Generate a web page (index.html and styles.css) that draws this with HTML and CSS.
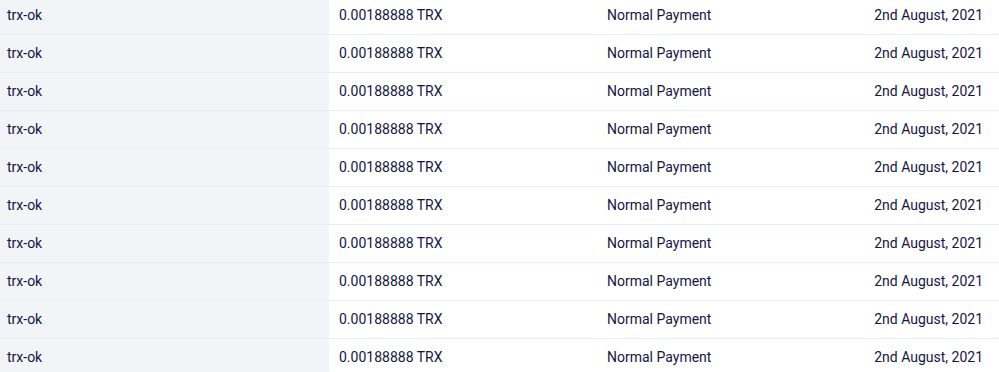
FILE: index.html
```html
<!DOCTYPE html>
<html lang="en">
<head>
<meta charset="utf-8">
<title>Payments</title>
<link rel="stylesheet" href="styles.css">
</head>
<body>
<div class="table">
  <div class="row"><div class="cell name">trx-ok</div><div class="cell amount">0.00188888 TRX</div><div class="cell type">Normal Payment</div><div class="cell date">2nd August, 2021</div></div>
  <div class="row"><div class="cell name">trx-ok</div><div class="cell amount">0.00188888 TRX</div><div class="cell type">Normal Payment</div><div class="cell date">2nd August, 2021</div></div>
  <div class="row"><div class="cell name">trx-ok</div><div class="cell amount">0.00188888 TRX</div><div class="cell type">Normal Payment</div><div class="cell date">2nd August, 2021</div></div>
  <div class="row"><div class="cell name">trx-ok</div><div class="cell amount">0.00188888 TRX</div><div class="cell type">Normal Payment</div><div class="cell date">2nd August, 2021</div></div>
  <div class="row"><div class="cell name">trx-ok</div><div class="cell amount">0.00188888 TRX</div><div class="cell type">Normal Payment</div><div class="cell date">2nd August, 2021</div></div>
  <div class="row"><div class="cell name">trx-ok</div><div class="cell amount">0.00188888 TRX</div><div class="cell type">Normal Payment</div><div class="cell date">2nd August, 2021</div></div>
  <div class="row"><div class="cell name">trx-ok</div><div class="cell amount">0.00188888 TRX</div><div class="cell type">Normal Payment</div><div class="cell date">2nd August, 2021</div></div>
  <div class="row"><div class="cell name">trx-ok</div><div class="cell amount">0.00188888 TRX</div><div class="cell type">Normal Payment</div><div class="cell date">2nd August, 2021</div></div>
  <div class="row"><div class="cell name">trx-ok</div><div class="cell amount">0.00188888 TRX</div><div class="cell type">Normal Payment</div><div class="cell date">2nd August, 2021</div></div>
  <div class="row"><div class="cell name">trx-ok</div><div class="cell amount">0.00188888 TRX</div><div class="cell type">Normal Payment</div><div class="cell date">2nd August, 2021</div></div>
</div>
</body>
</html>
```
FILE: styles.css
```css
html, body {
  margin: 0;
  padding: 0;
  background: #ffffff;
  overflow: hidden;
}
body {
  font-family: Roboto, "Liberation Sans", Arial, sans-serif;
  font-size: 14px;
  color: #15153f;
}
.table {
  margin-top: -3px;
}
.row {
  display: grid;
  grid-template-columns: 329px 268px 1fr 1fr;
  height: 37px;
  border-bottom: 1px solid #e5edf9;
}
.cell {
  display: flex;
  align-items: center;
  padding-bottom: 2px;
  white-space: nowrap;
}
.name {
  background: #f2f4f8;
  padding-left: 7px;
}
.amount {
  padding-left: 10px;
}
.type {
  padding-left: 10px;
}
.date {
  justify-content: flex-end;
  padding-right: 16px;
}
```
